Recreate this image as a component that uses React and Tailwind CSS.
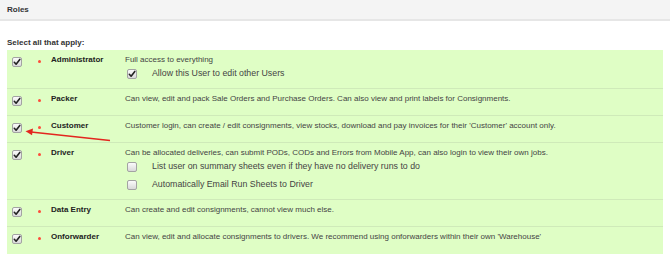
import React from 'react';

const roles = [
  {
    name: 'Administrator',
    desc: 'Full access to everything',
    checked: true,
    options: [{ label: 'Allow this User to edit other Users', checked: true }],
  },
  {
    name: 'Packer',
    desc: 'Can view, edit and pack Sale Orders and Purchase Orders. Can also view and print labels for Consignments.',
    checked: true,
  },
  {
    name: 'Customer',
    desc: "Customer login, can create / edit consignments, view stocks, download and pay invoices for their 'Customer' account only.",
    checked: true,
  },
  {
    name: 'Driver',
    desc: 'Can be allocated deliveries, can submit PODs, CODs and Errors from Mobile App, can also login to view their own jobs.',
    checked: true,
    options: [
      { label: 'List user on summary sheets even if they have no delivery runs to do', checked: false },
      { label: 'Automatically Email Run Sheets to Driver', checked: false },
    ],
  },
  {
    name: 'Data Entry',
    desc: 'Can create and edit consignments, cannot view much else.',
    checked: true,
  },
  {
    name: 'Onforwarder',
    desc: "Can view, edit and allocate consignments to drivers. We recommend using onforwarders within their own 'Warehouse'",
    checked: true,
  },
];

function Checkbox({ checked }) {
  return (
    <div className="w-[10px] h-[10px] shrink-0 rounded-[2px] border border-[#a3a3a3] bg-gradient-to-b from-[#fbfbfb] to-[#d9d9d9] flex items-center justify-center">
      {checked && (
        <svg width="8" height="8" viewBox="0 0 8 8">
          <path d="M1.3 4.3 L3.1 6.2 L6.8 1.4" fill="none" stroke="#222" strokeWidth="1.6" strokeLinecap="round" strokeLinejoin="round" />
        </svg>
      )}
    </div>
  );
}

export default function App() {
  return (
    <div className="relative w-[670px] h-[272px] bg-white text-[#333]" style={{ fontFamily: '"Liberation Sans", Arial, sans-serif' }}>
      <div className="h-[21px] bg-[#f4f4f4] border-b-2 border-[#e6e6e6] flex items-center px-[7px]">
        <span className="text-[8px] font-bold text-[#333]">Roles</span>
      </div>

      <div className="px-[7px] pt-[16px]">
        <p className="text-[8px] font-bold leading-[11px] text-[#333] mb-[2px]">Select all that apply:</p>
        <div className="w-[656px] bg-[#dffec5]">
          {roles.map((role, i) => (
            <div
              key={role.name}
              className={`flex min-h-[27px] pt-[4px] pb-[5px] ${i < roles.length - 1 ? 'border-b border-[#cfeab9]' : ''}`}
            >
              <div className="ml-[5px] mt-[3px]">
                <Checkbox checked={role.checked} />
              </div>
              <div className="ml-[16px] mt-[6px] w-[3px] h-[3px] rounded-full bg-[#ff4b3a]" />
              <div className="ml-[10px] w-[74px] text-[8px] font-bold leading-[11px] text-[#222]">{role.name}</div>
              <div className="flex flex-col">
                <div className="text-[8px] leading-[11px] text-[#444]">{role.desc}</div>
                {role.options &&
                  role.options.map((opt) => (
                    <div key={opt.label} className="flex items-center h-[18px] pl-[2px]">
                      <Checkbox checked={opt.checked} />
                      <span className="ml-[15px] text-[8.8px] text-[#444]">{opt.label}</span>
                    </div>
                  ))}
              </div>
            </div>
          ))}
        </div>
      </div>

      <svg className="absolute left-0 top-0 pointer-events-none" width="670" height="272">
        <line x1="110" y1="140.5" x2="31" y2="132" stroke="#e3261f" strokeWidth="1.6" />
        <path d="M25.5 131.3 L33 128.6 L32 135.2 Z" fill="#e3261f" />
      </svg>
    </div>
  );
}
